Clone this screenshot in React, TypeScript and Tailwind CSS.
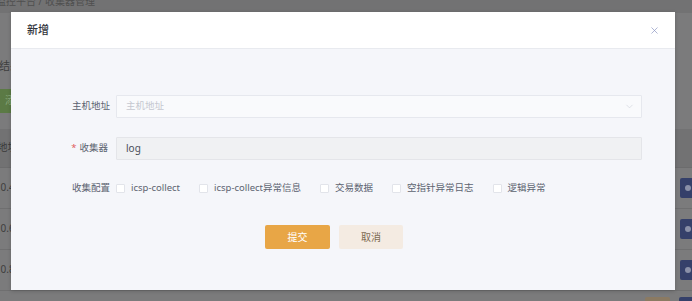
import { ChevronDown, X } from 'lucide-react'

const font = { fontFamily: '"Noto Sans", "Noto Sans CJK SC", sans-serif' }

const collectOptions = ['icsp-collect', 'icsp-collect异常信息', '交易数据', '空指针异常日志', '逻辑异常']

const rows = ['10.0.0.4', '10.0.0.6', '10.0.0.8']

function Checkbox({ label }: { label: string }) {
  return (
    <label className="flex items-center gap-[6px] text-[9.5px] text-[#5c6370]">
      <span className="w-[9px] h-[9px] border border-[#e2e4ea] bg-white rounded-[1px]" />
      {label}
    </label>
  )
}

export default function App() {
  return (
    <div className="relative w-[692px] h-[301px] overflow-hidden bg-[#7b7b7c]" style={font}>
      {/* dimmed page behind the dialog */}
      <div className="flex flex-col">
        <div className="h-[13px] bg-[#727273] overflow-hidden">
          <div className="-mt-[6px] text-[10px] text-[#4f4f4f] whitespace-nowrap -ml-[4px]">监控平台 / 收集器管理</div>
        </div>
        <div className="-ml-[23px] mt-[45px] text-[11px] text-[#3f3f3f] whitespace-nowrap">采集结果</div>
        <div className="-ml-[20px] mt-[14px] w-[60px] h-[24px] bg-[#5b7a45] rounded-[2px] text-[10px] text-[#8aa77a] flex items-center pl-[25px]">添加</div>
        <div className="mt-[16px] flex flex-col">
          <div className="h-[39px] bg-[#727273] border-b border-[#6c6c6d] flex items-center">
            <span className="-ml-[12px] text-[10px] text-[#3a3a3a]">IP地址</span>
          </div>
          {rows.map(ip => (
            <div key={ip} className="h-[41px] border-b border-[#6f6f70] flex items-center justify-between">
              <span className="-ml-[22px] text-[10px] text-[#3e3e3e]">{ip}</span>
              <span className="w-[20px] h-[20px] bg-[#35406a] rounded-[2px] mr-[-8px] flex items-center pl-[5px]">
                <span className="w-[6px] h-[6px] rounded-full bg-[#8a90a8]" />
              </span>
            </div>
          ))}
          <div className="h-[20px] flex items-start justify-end gap-[9px] pt-[6px]">
            <span className="w-[25px] h-[14px] bg-[#8b7a62] rounded-[2px]" />
            <span className="w-[13px] h-[14px] bg-[#35406a] rounded-l-[2px]" />
          </div>
        </div>
      </div>

      {/* dialog */}
      <div className="absolute left-[11px] top-[12px] w-[664px] h-[278px] bg-[#f5f6fa] flex flex-col shadow-[0_1px_4px_rgba(0,0,0,0.2)]">
        <div className="h-[37px] bg-white border-b border-[#e8eaef] flex items-center justify-between pl-[16px] pr-[15px]">
          <span className="text-[11px] font-medium text-[#30333a]">新增</span>
          <X size={11} strokeWidth={1.5} className="text-[#8a94c0]" />
        </div>

        <div className="flex flex-col pt-[46px] pl-[61px] pr-[33px]">
          <div className="flex items-center h-[23px]">
            <span className="w-[44px] pr-[8px] text-right text-[9.5px] text-[#5c6370] whitespace-nowrap">主机地址</span>
            <div className="flex-1 h-[23px] border border-[#e6e8ee] bg-[#f9fafc] rounded-[1px] flex items-center justify-between pl-[9px] pr-[6px]">
              <span className="text-[9.5px] text-[#c5c8d0]">主机地址</span>
              <ChevronDown size={11} strokeWidth={1.2} className="text-[#c8ccd4]" />
            </div>
          </div>

          <div className="flex items-center h-[23px] mt-[19px]">
            <span className="w-[44px] pr-[8px] text-right text-[9.5px] text-[#5c6370] whitespace-nowrap flex justify-end">
              <span className="text-[#e05a5a] mr-[3px]">*</span>收集器
            </span>
            <div className="flex-1 h-[23px] border border-[#e4e5e9] bg-[#f0f1f3] rounded-[1px] flex items-center pl-[9px]">
              <span className="text-[10px] text-[#4a4f5a]">log</span>
            </div>
          </div>

          <div className="flex items-center mt-[21px]">
            <span className="w-[44px] pr-[8px] text-right text-[9.5px] text-[#5c6370] whitespace-nowrap">收集配置</span>
            <div className="flex items-center gap-[19px]">
              {collectOptions.map(o => (
                <Checkbox key={o} label={o} />
              ))}
            </div>
          </div>

          <div className="flex justify-center gap-[9px] mt-[30px] pr-[46px]">
            <button className="w-[65px] h-[24px] bg-[#e8a646] rounded-[2px] text-[10px] text-white">提交</button>
            <button className="w-[64px] h-[24px] bg-[#f4ebe2] rounded-[2px] text-[10px] text-[#7d6a52]">取消</button>
          </div>
        </div>
      </div>
    </div>
  )
}
